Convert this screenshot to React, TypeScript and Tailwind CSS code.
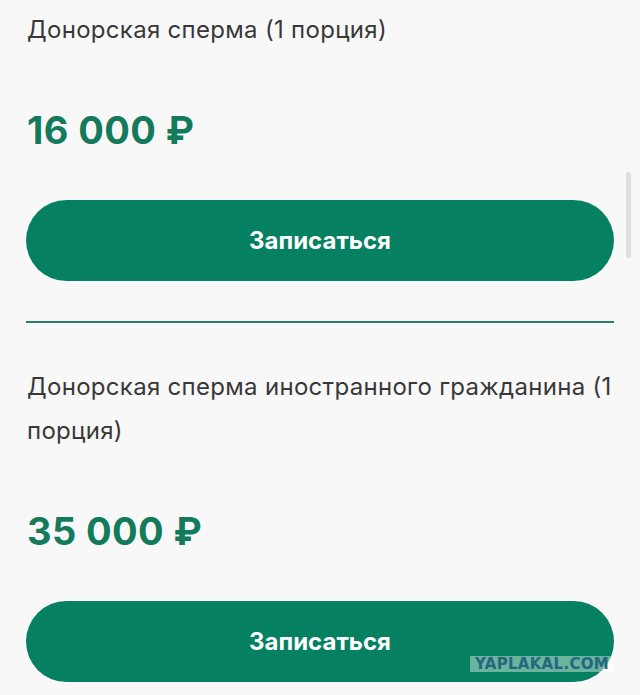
const services = [
  { title: "Донорская сперма (1 порция)", price: "16 000 ₽" },
  { title: "Донорская сперма иностранного гражданина (1 порция)", price: "35 000 ₽" },
];

export default function App() {
  return (
    <div
      className="relative min-h-[695px] w-[640px] overflow-hidden bg-[#f8f8f8]"
      style={{ fontFamily: "Inter, 'Noto Sans', sans-serif" }}
    >
      <div className="flex flex-col px-[26px] pt-2">
        {services.map((s, i) => (
          <div key={i} className="flex flex-col">
            {i > 0 && <div className="mt-10 mb-[42px] h-[2px] bg-[#2d7c69]" />}
            <p className="pl-[1px] text-[24px] font-normal leading-[44px] tracking-[0.3px] text-[#383838]">
              {s.title}
            </p>
            <p className="mt-14 pl-[1px] text-[38px] font-bold leading-[44px] tracking-[0.4px] text-[#137a5b]">
              {s.price}
            </p>
            <button className="mt-12 h-[81px] w-full rounded-full bg-[#058060] text-[24px] font-bold text-white">
              Записаться
            </button>
          </div>
        ))}
      </div>

      {/* scrollbar */}
      <div className="absolute left-[626px] top-[172px] h-[86px] w-[5px] rounded-full bg-[#dedede]" />

      {/* watermark */}
      <div className="absolute left-[470px] top-[656px] flex h-[16px] w-[144px] items-center justify-center bg-white/40">
        <span
          className="text-[15px] font-black leading-none tracking-[0.3px] text-[#27667c]"
          style={{ fontFamily: "'DejaVu Sans', sans-serif" }}
        >
          YAPLAKAL.COM
        </span>
      </div>
    </div>
  );
}
